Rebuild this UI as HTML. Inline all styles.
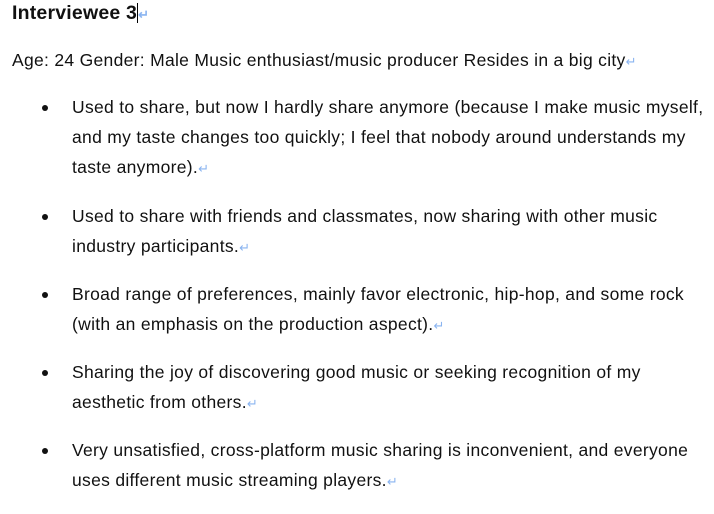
<!DOCTYPE html>
<html><head><meta charset="utf-8"><style>
html,body{margin:0;padding:0;background:#fff;}
body{width:714px;height:514px;overflow:hidden;font-family:"Liberation Sans",sans-serif;color:#111;font-size:17.5px;letter-spacing:0.3px;position:relative;}
.l{position:absolute;white-space:nowrap;line-height:20px;}
.r{color:#8ab4f0;font-size:13px;letter-spacing:0;}
.b{position:absolute;left:42px;width:6px;height:6px;border-radius:50%;background:#111;}
</style></head><body>
<div class="l" style="left:12px;top:3px;font-weight:bold;font-size:19.5px;letter-spacing:0.2px;">Interviewee 3<span style="display:inline-block;width:1px;height:20px;background:#000;vertical-align:-4px"></span><span class="r">↵</span></div>
<div class="l" style="left:12px;top:50px;">Age: 24 Gender: Male Music enthusiast/music producer Resides in a big city<span class="r">↵</span></div>

<div class="b" style="top:105px"></div>
<div class="l" style="left:72px;top:97px;">Used to share, but now I hardly share anymore (because I make music myself,</div>
<div class="l" style="left:72px;top:127px;">and my taste changes too quickly; I feel that nobody around understands my</div>
<div class="l" style="left:72px;top:157px;">taste anymore).<span class="r">↵</span></div>

<div class="b" style="top:214px"></div>
<div class="l" style="left:72px;top:206px;">Used to share with friends and classmates, now sharing with other music</div>
<div class="l" style="left:72px;top:236px;">industry participants.<span class="r">↵</span></div>

<div class="b" style="top:292px"></div>
<div class="l" style="left:72px;top:284px;">Broad range of preferences, mainly favor electronic, hip-hop, and some rock</div>
<div class="l" style="left:72px;top:314px;">(with an emphasis on the production aspect).<span class="r">↵</span></div>

<div class="b" style="top:370px"></div>
<div class="l" style="left:72px;top:362px;">Sharing the joy of discovering good music or seeking recognition of my</div>
<div class="l" style="left:72px;top:392px;">aesthetic from others.<span class="r">↵</span></div>

<div class="b" style="top:448px"></div>
<div class="l" style="left:72px;top:440px;">Very unsatisfied, cross-platform music sharing is inconvenient, and everyone</div>
<div class="l" style="left:72px;top:470px;">uses different music streaming players.<span class="r">↵</span></div>
</body></html>
